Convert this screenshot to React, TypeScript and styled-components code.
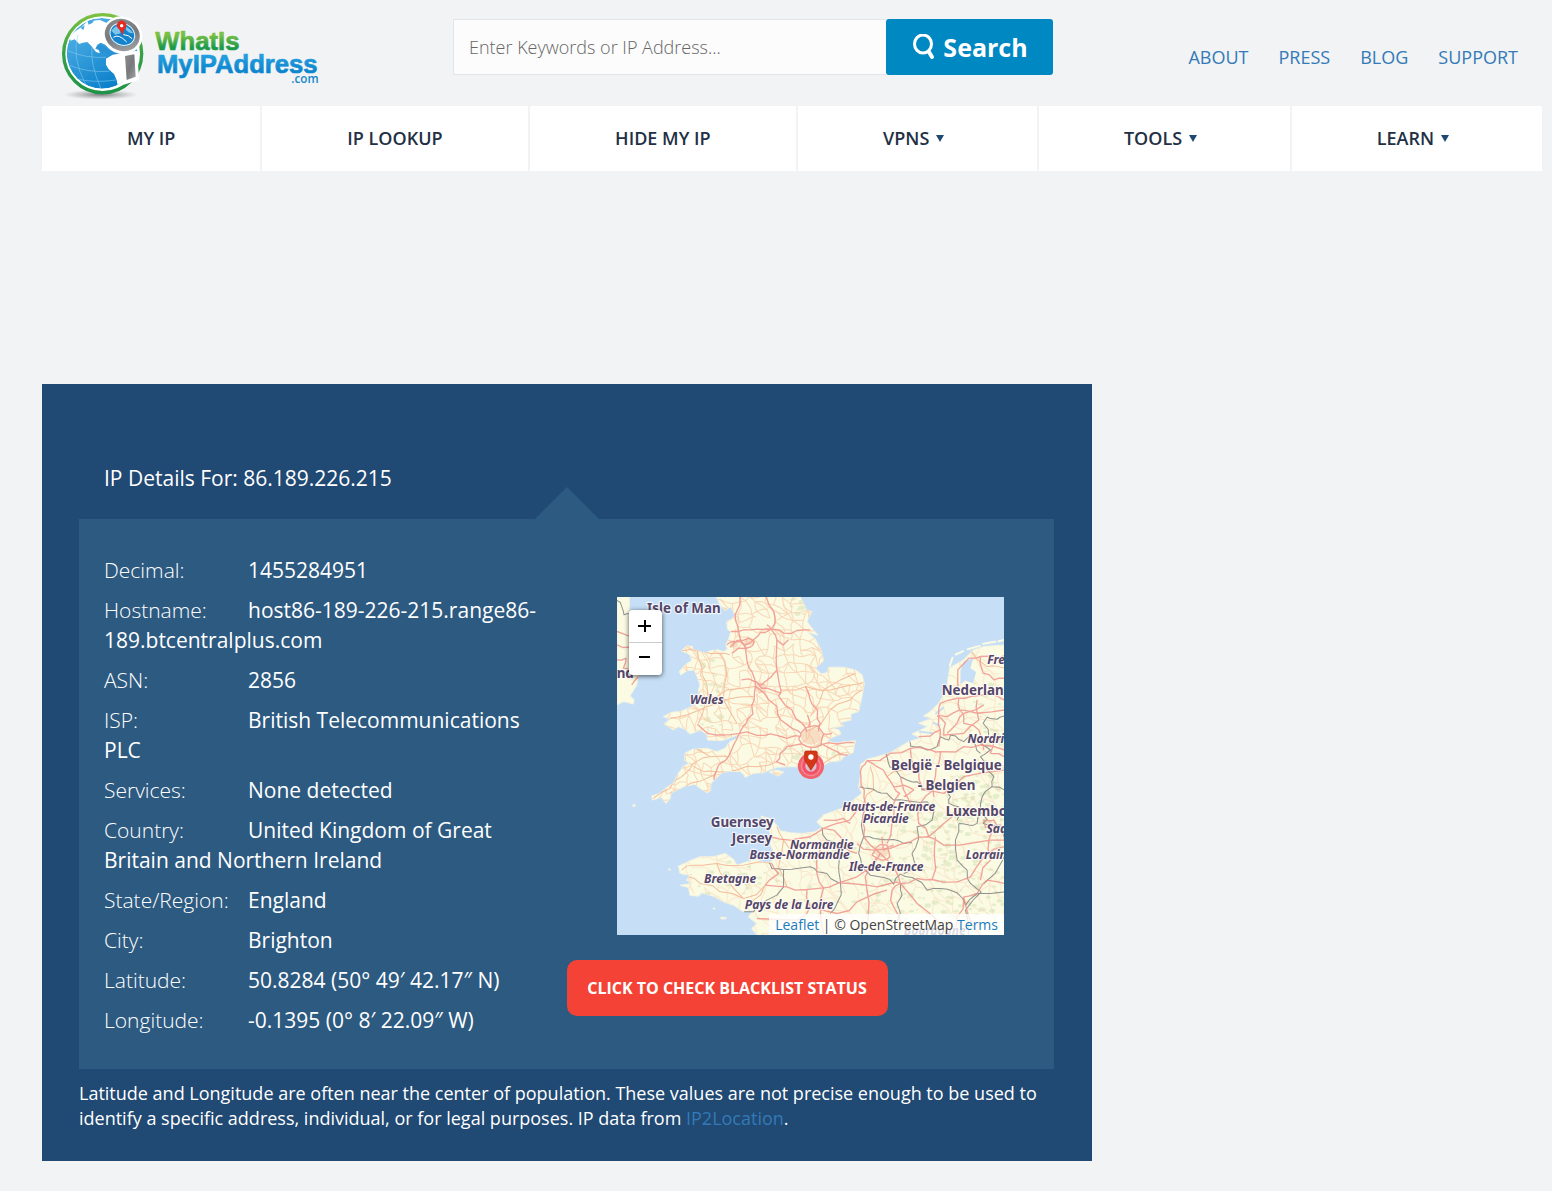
import React from 'react';
import styled, { createGlobalStyle } from 'styled-components';

const GlobalStyle = createGlobalStyle`
  *, *::before, *::after { box-sizing: border-box; }
  body {
    margin: 0;
    background: #f1f3f5;
    color: #fff;
    font-family: 'Open Sans', 'Noto Sans', sans-serif;
  }
`;

const Page = styled.div`
  padding: 0 10px 30px 42px;
`;

const Header = styled.header`
  display: grid;
  grid-template-columns: 411fr 600fr 489fr;
  height: 106px;
`;

const LogoLink = styled.a`
  padding-left: 18px;
  svg { display: block; }
`;

const SearchForm = styled.form`
  display: flex;
  height: 56px;
  margin-top: 19px;
`;

const SearchInput = styled.input`
  flex: 1;
  min-width: 0;
  padding: 0 15px;
  border: 1px solid #e3e5e8;
  border-right: 0;
  border-radius: 0;
  background: #fcfcfc;
  color: #444;
  font: 300 18px 'Open Sans', sans-serif;
  &::placeholder { color: #666; opacity: 1; }
`;

const SearchButton = styled.button`
  display: flex;
  align-items: center;
  justify-content: center;
  gap: 8px;
  width: 167px;
  padding: 0;
  border: 0;
  border-radius: 3px;
  background: #0088c2;
  color: #fff;
  font: 700 25px 'Open Sans', sans-serif;
  cursor: pointer;
`;

const TopLinks = styled.nav`
  display: flex;
  justify-content: flex-end;
  gap: 30px;
  padding: 45px 24px 0 0;
`;

const TopLink = styled.a`
  color: #337ab7;
  font-size: 18px;
  font-weight: 500;
  line-height: 25px;
  text-decoration: none;
`;

const MainNav = styled.nav`
  display: grid;
  grid-template-columns: 218fr 265fr 266fr 239fr 250fr 250fr;
  gap: 2px;
`;

const NavItem = styled.a<{ $menu?: boolean }>`
  display: flex;
  align-items: center;
  justify-content: center;
  gap: 7px;
  height: 65px;
  padding-bottom: 2px;
  padding-right: ${(p) => (p.$menu ? '8px' : '0')};
  background: #fff;
  color: #233044;
  font-size: 18px;
  font-weight: 600;
  text-decoration: none;
`;

const Caret = styled.span`
  width: 0;
  margin-top: 2px;
  border: 4px solid transparent;
  border-top: 7px solid #1f4973;
  border-bottom: 0;
`;

const Panel = styled.main`
  width: 70%;
  margin-top: 213px;
  padding: 79px 38px 30px 37px;
  background: #204973;
`;

const Title = styled.h1`
  margin: 0 0 26px;
  padding-left: 25px;
  font-size: 21px;
  font-weight: 400;
  line-height: 30px;
`;

const Details = styled.section`
  position: relative;
  display: grid;
  grid-template-columns: 1fr 1fr;
  background: #2d5a81;
  &::before {
    content: '';
    position: absolute;
    left: calc(50% - 32px);
    top: -32px;
    border: 32px solid transparent;
    border-top: 0;
    border-bottom-color: #2d5a81;
  }
`;

const Facts = styled.dl`
  display: flex;
  flex-direction: column;
  gap: 10px;
  margin: 0;
  padding: 36px 24px 34px 25px;
  font-size: 21px;
  line-height: 30px;
`;

const Fact = styled.div`
  dt {
    display: inline-block;
    min-width: 144px;
    font-weight: 300;
  }
  dd {
    display: inline;
    margin: 0;
  }
`;

const MapColumn = styled.div`
  display: flex;
  flex-direction: column;
  align-items: flex-start;
  gap: 25px;
  padding-top: 78px;
`;

const MapBox = styled.div`
  position: relative;
  align-self: stretch;
  height: 338px;
  margin: 0 50px;
  overflow: hidden;
  background: #c6dff6;
  > svg { display: block; width: 100%; height: 100%; }
`;

const ZoomControl = styled.div`
  position: absolute;
  left: 12px;
  top: 13px;
  width: 33px;
  overflow: hidden;
  border-radius: 4px;
  box-shadow: 0 1px 5px rgba(0, 0, 0, 0.65);
`;

const ZoomButton = styled.button`
  display: block;
  width: 100%;
  height: 32px;
  padding: 0;
  border: 0;
  background: #fff;
  & + & { height: 33px; border-top: 1px solid #ccc; }
  svg { display: block; margin: 0 auto; }
`;

const Attribution = styled.div`
  position: absolute;
  right: 0;
  bottom: 0;
  padding: 0 6px;
  background: rgba(255, 255, 255, 0.8);
  color: #444;
  font-size: 14px;
  line-height: 21px;
  a { color: #1a7dbd; text-decoration: none; }
`;

const BlacklistButton = styled.button`
  height: 56px;
  min-width: 321px;
  padding: 0 18px;
  border: 0;
  border-radius: 10px;
  background: #f44336;
  color: #fff;
  font: 700 16px 'Open Sans', sans-serif;
  cursor: pointer;
`;

const Note = styled.p`
  margin: 12px 0 0;
  font-size: 18px;
  line-height: 25px;
  a { color: #337ab7; text-decoration: none; }
`;

/* ---------- map drawing ---------- */

const BRITAIN =
  'M318 21L330 45L345 62L362 50L375 78L362 90L350 95L352 118L362 125L355 150L347 165L352 178L340 186L325 180L300 183L283 190L262 182L248 180L247 170L230 168L215 183L240 195L245 212L225 225L208 245L212 255L230 243L252 240L262 262L270 285L265 300L268 320L255 345L235 355L210 365L185 367L160 380L180 388L162 402L190 420L205 410L225 418L240 432L270 420L290 433L292 450L335 452L370 440L390 430L378 447L360 455L345 475L320 485L290 475L262 477L248 478L225 490L224 512L240 520L222 527L205 550L190 580L170 592L150 610L125 618L128 630L155 622L168 640L180 625L182 610L200 600L225 588L255 583L270 595L292 608L302 600L302 580L320 563L335 548L360 543L390 545L400 552L405 562L430 550L460 548L478 540L500 532L530 530L560 530L600 535L640 525L660 515L690 512L700 500L728 488L735 452L700 455L680 460L650 452L665 443L692 432L686 420L664 414L700 408L690 398L722 390L722 372L745 365L755 320L762 280L755 255L735 240L700 232L655 232L652 248L632 252L615 235L640 212L632 180L615 148L590 125L622 136L605 115L590 95L605 65L590 62L570 21ZM478 546L497 540L520 546L504 558Z';
const IRELAND = 'M21 21H58V120H70L85 255L80 285L60 318L72 330L70 342L40 335L21 345Z';
const CONTINENT =
  'M1182 165L1120 170L1090 180L1075 195L1060 210L1018 234L1012 270L1010 290L1000 315L985 340L960 365L940 378L965 385L925 400L952 410L905 432L932 444L895 455L870 470L840 488L800 500L770 508L750 525L750 560L745 590L755 610L735 625L710 650L680 660L640 675L620 695L635 712L615 725L580 730L540 728L510 722L500 706L480 686L452 678L470 700L480 730L480 760L490 790L485 815L460 817L440 808L410 815L380 825L370 808L345 790L310 800L270 800L240 812L205 828L210 850L240 855L230 870L245 880L210 885L235 892L240 915L265 918L275 908L310 918L340 935L370 945L400 965L430 960L415 980L440 1000L425 1015L440 1035H1182Z';

const RED_ROADS = [
  'M390 21L375 75L383 110L405 170L410 210L425 245L436 290L432 330L428 372L408 400L388 430L368 470L355 500L330 520L318 545L312 570',
  'M468 21L490 65L494 100L482 118L500 150L498 210L502 250L512 300L505 318L545 360L575 400L590 425',
  'M362 125L400 120L440 118L482 118L520 130L560 122L600 120',
  'M350 165L370 155L405 165L430 150L450 128L482 118L470 105',
  'M365 190L385 175L420 172L432 155L415 145L380 152L360 172',
  'M500 150L520 165L535 150',
  'M394 270L436 275L455 295L485 300L512 310',
  'M436 290L462 310L500 350L512 390L545 415L572 430',
  'M436 275L455 285L470 272L482 262L500 240',
  'M262 403L292 430L335 435L388 430L440 436L480 432L530 445L572 440',
  'M586 290L600 330L622 360L630 400L625 425',
  'M572 430L590 412L625 410L640 432L632 465L600 472L575 462L565 445L572 430',
  'M595 412L592 375M640 432L665 430M632 465L680 462L732 458M632 460L680 485L712 495',
  'M602 472V500M572 462L530 470L510 490L498 515L525 525',
  'M85 260L65 285M21 125L60 140M21 165L60 172M21 210L48 205L40 235L60 240',
  'M770 512L755 530L752 560L762 600L765 640L758 700L760 740',
  'M770 512L800 530L830 560L850 590L868 610L850 640L845 700L830 760',
  'M770 512L840 490L900 475L960 480L990 485L1060 470L1110 465L1182 480',
  'M850 590L880 585L910 600L880 620M870 560L880 600L900 640',
  'M990 485L985 520L975 560L970 620M900 475L925 545L940 600L1000 610L1060 560L1182 540',
  'M1075 205L1042 240V290M1075 205L1110 200L1150 205L1182 198M1110 200L1118 250L1150 270L1182 265',
  'M990 340L985 380L990 420L985 470M990 340L1040 325L1080 320L1182 330M1045 325L1048 360L1010 380L980 378M1048 360L1100 370L1182 360M1048 360L1060 400L1105 420L1120 480',
  'M980 378L1005 400L1000 435L1060 430L1105 390L1100 330M925 440L960 438L990 420M1182 440L1150 450L1140 490M1140 490L1182 500',
  'M1010 430L1040 400L1060 370L1120 345',
  'M800 770L830 765L838 800L815 810L785 795L800 770M815 740L820 780L850 765M760 740L810 790L850 830L870 880',
  'M740 760L790 780L840 775L900 755L955 740L1000 765L1080 760L1182 750',
  'M955 740L925 700L930 640L970 600M955 740L1000 700L1040 650M975 740L972 800L965 868',
  'M870 880L920 865L965 868L1040 875L1080 860L1120 800L1182 770',
  'M870 880L845 900L850 950L870 1000M870 880L920 940L970 980L1030 1035M810 790L780 830L770 900L772 1000',
  'M480 740L540 750L600 740L640 715L680 700L718 690L760 640M640 715L690 740L700 770L740 790M640 690L700 685L720 700',
  'M485 820L505 850L465 885M465 885L530 890L590 898L640 893L685 878L740 860L800 800M640 893L620 850L630 780M590 898L600 950L560 990L440 985',
  'M685 878L770 885L840 880L870 880M640 893L630 950L640 1030M600 950L680 970L740 935L830 900',
  'M1182 880L1130 870L1100 910L1060 920L1040 980L1030 1035M1060 920L1075 980L1110 1035M1140 700L1135 750L1140 810L1110 870',
  'M1120 690L1150 690L1160 710L1125 712Z',
];

const ORANGE_ROADS = [
  'M215 183L262 182L330 190L360 195M262 182L275 230L290 280L285 340L265 400M180 385L230 375L290 350L340 330L430 320',
  'M130 625L180 595L215 560L250 520L300 500L355 500M180 610L240 580L300 560L318 545M240 520L280 545L318 545',
  'M318 545L380 540L440 530L500 515M560 528L640 520L700 490M590 425L660 360L720 330L755 300M600 380L640 300L735 250',
  'M215 840L250 825L320 820L400 825L485 820M230 860L270 880L330 905L400 925L465 885M465 885L430 930L405 960M320 820L350 870L400 925',
  'M500 710L520 750L560 790L620 800L700 790M520 750L505 830L530 890M780 530L790 600L760 640M830 560L880 540L930 545M1080 180L1130 230L1182 235',
  'M262 477L300 500M330 190L350 250L340 330L380 400M436 290L350 300L268 320M512 300L586 290L660 300L755 280',
];

const BORDERS = [
  'M21 32L35 50L42 75L58 72',
  'M898 455L900 468L930 470L950 480L980 470L990 440L1015 450L1020 435L1045 448L1060 455L1075 440L1095 465L1110 490',
  'M1182 378L1160 388L1130 382L1118 400L1135 440L1110 460L1140 480L1110 500L1130 540L1150 560L1145 590L1182 600',
  'M828 492L838 530L860 545L890 570L920 575L935 600L1000 590L1020 620L1015 640L1045 650L1040 690',
  'M748 590L770 595L800 605L830 610L850 630L890 632L950 635L975 650M970 640L965 690L920 710L925 745L905 790L915 825L880 850',
  'M762 660L760 740L790 745L850 748L880 760L905 758M760 740L745 790L755 830L780 855L820 862L850 882L870 852L905 862L950 900L990 895L1040 908L1065 945L1100 910L1182 905',
  'M1045 700L1075 705L1100 700L1110 660L1115 620L1145 590M1045 700L1035 750L1040 810L1070 840L1080 880L1112 905L1065 960L1075 1035',
  'M1110 665L1130 690L1118 700L1170 705L1182 760M1120 880L1182 800',
  'M635 712L650 750L700 770L685 830L690 870L680 940L660 970',
  'M478 818L485 835L520 838L560 835L600 830L620 845L650 850L685 878M520 838V890L500 915L470 930L440 950L430 965L402 965',
  'M870 880L875 915L860 940L870 970L850 1035',
];

/* Deterministic noise for the lattice of local roads and the woodland specks. */
const noise = (a: number, b: number, k: number) => {
  const v = Math.sin(a * 127.1 + b * 311.7 + k * 74.7) * 43758.5453;
  return v - Math.floor(v);
};

/* Splits a leg at a displaced midpoint so that long lines wander as roads do. */
const wander = (a: number[], b: number[], k: number) => {
  const len = Math.hypot(b[0] - a[0], b[1] - a[1]);
  const mx = (a[0] + b[0]) / 2 + (noise(a[0], b[1], k) - 0.5) * len * 0.28;
  const my = (a[1] + b[1]) / 2 + (noise(a[1], b[0], k + 1) - 0.5) * len * 0.28;
  return `L${Math.round(mx)} ${Math.round(my)}L${b[0]} ${b[1]}`;
};

const roughen = (d: string) =>
  d.replace(/M([^MZ]+)/g, (_, body: string) => {
    if (/[HV]/.test(body)) return `M${body}`;
    const pts = body.split('L').map((p) => p.trim().split(' ').map(Number));
    return `M${pts[0].join(' ')}` + pts.slice(1).map((p, i) => wander(pts[i], p, i)).join('');
  });

const lattice = (x0: number, y0: number, x1: number, y1: number, step: number, keep: number) => {
  const node = (i: number, j: number) => [
    Math.round(x0 + i * step + (noise(i, j, 1) - 0.5) * step * 0.9),
    Math.round(y0 + j * step + (noise(i, j, 2) - 0.5) * step * 0.9),
  ];
  const leg = (a: number[], b: number[]) => `M${a.join(' ')}${wander(a, b, 9)}`;
  let d = '';
  for (let i = 0; x0 + i * step <= x1; i++) {
    for (let j = 0; y0 + j * step <= y1; j++) {
      if (noise(i, j, 3) < keep) d += leg(node(i, j), node(i + 1, j));
      if (noise(i, j, 4) < keep) d += leg(node(i, j), node(i, j + 1));
      if (noise(i, j, 5) < keep * 0.45) d += leg(node(i, j), node(i + 1, j + 1));
    }
  }
  return d;
};

const BRITAIN_LANES = lattice(120, 10, 780, 660, 27, 0.75);
const CONTINENT_LANES = lattice(190, 150, 1190, 1040, 34, 0.55);

const WOODS: [number, number, number][] = [];
const wood = (x: number, y: number, w: number, h: number, n: number) => {
  for (let i = 0; i < n; i++) {
    WOODS.push([
      Math.round(x + noise(i, x, 6) * w),
      Math.round(y + noise(i, y, 7) * h),
      3 + Math.round(noise(i, x + y, 8) * 7),
    ]);
  }
};
wood(265, 200, 70, 210, 24);
wood(540, 25, 40, 50, 10);
wood(520, 460, 160, 55, 18);
wood(780, 660, 400, 370, 240);
wood(1010, 530, 170, 160, 80);
wood(480, 740, 300, 290, 40);
wood(240, 810, 230, 110, 22);
wood(1080, 280, 100, 200, 20);

type Label = { x: number; y: number; text: string; country?: boolean };
const LABELS: Label[] = [
  { x: 111, y: 71, text: 'Isle of Man', country: true },
  { x: 20, y: 264, text: 'nd', country: true },
  { x: 240, y: 341, text: 'Wales' },
  { x: 1130, y: 222, text: 'Fre' },
  { x: 994, y: 314, text: 'Nederlan', country: true },
  { x: 1071, y: 458, text: 'Nordri' },
  { x: 842, y: 539, text: 'België - Belgique', country: true },
  { x: 922, y: 599, text: '- Belgien', country: true },
  { x: 696, y: 664, text: 'Hauts-de-France' },
  { x: 757, y: 699, text: 'Picardie' },
  { x: 1006, y: 679, text: 'Luxembo', country: true },
  { x: 1128, y: 730, text: 'Saa' },
  { x: 302, y: 710, text: 'Guernsey', country: true },
  { x: 365, y: 760, text: 'Jersey', country: true },
  { x: 539, y: 776, text: 'Normandie' },
  { x: 418, y: 808, text: 'Basse-Normandie' },
  { x: 716, y: 843, text: 'Ile-de-France' },
  { x: 1066, y: 806, text: 'Lorrain' },
  { x: 282, y: 879, text: 'Bretagne' },
  { x: 404, y: 956, text: 'Pays de la Loire' },
  { x: 880, y: 1033, text: 'Bourgogne' },
];

const MapLabel = styled.text<{ $country?: boolean }>`
  fill: #564669;
  stroke: #fff;
  stroke-opacity: 0.7;
  stroke-width: 7px;
  stroke-linejoin: round;
  paint-order: stroke;
  font-family: 'Noto Sans', 'Open Sans', sans-serif;
  font-size: ${(p) => (p.$country ? '40px' : '36px')};
  font-weight: 700;
  font-style: ${(p) => (p.$country ? 'normal' : 'italic')};
`;

const RegionMap = () => (
  <svg viewBox="21 21 1161 1014" preserveAspectRatio="xMidYMid slice" role="img" aria-label="Map of the area around Brighton">
    <defs>
      <clipPath id="britain"><path d={BRITAIN} /></clipPath>
      <clipPath id="continent"><path d={CONTINENT} /></clipPath>
      <clipPath id="land"><path d={BRITAIN + CONTINENT + IRELAND} /></clipPath>
    </defs>
    <rect x="21" y="21" width="1161" height="1014" fill="#c6dff6" />
    <path d={BRITAIN + CONTINENT + IRELAND} fill="#fbfae3" stroke="#f3f3df" strokeWidth="3" strokeLinejoin="round" />
    <g clipPath="url(#land)" fill="#cfe0b2" opacity="0.5">
      {WOODS.map(([x, y, r], i) => (
        <ellipse key={i} cx={x} cy={y} rx={r} ry={Math.max(3, r - 3)} />
      ))}
    </g>
    <g fill="none" strokeWidth="3" stroke="#f8cdab" opacity="0.75">
      <path d={BRITAIN_LANES} clipPath="url(#britain)" />
      <path d={CONTINENT_LANES} clipPath="url(#continent)" opacity="0.5" />
    </g>
    <g fill="none" stroke="#f5bd9b" strokeWidth="3" strokeLinejoin="round" clipPath="url(#land)">
      {ORANGE_ROADS.map((d) => <path key={d} d={roughen(d)} />)}
    </g>
    <g fill="#f3b394" opacity="0.4">
      <ellipse cx="602" cy="440" rx="30" ry="24" />
      <ellipse cx="452" cy="294" rx="18" ry="15" />
      <ellipse cx="418" cy="156" rx="16" ry="10" />
      <ellipse cx="372" cy="165" rx="12" ry="9" />
      <ellipse cx="814" cy="786" rx="20" ry="16" />
    </g>
    <path d="M1060 216L1088 205L1080 235L1097 246L1088 280L1062 272L1050 285V242Z" fill="#c6dff6" />
    <path d="M1000 352L975 372M968 398L990 408M925 425L968 430" stroke="#c6dff6" strokeWidth="6" />
    <path d="M1018 228L1026 204M1036 194L1058 184M1072 178L1108 168M1118 162L1155 156M1164 154L1182 150" stroke="#fbfae3" strokeWidth="6" strokeLinecap="round" />
    <g fill="none" stroke="#777a7c" strokeWidth="3" strokeLinejoin="round" opacity="0.8">
      {BORDERS.map((d) => <path key={d} d={roughen(d)} />)}
    </g>
    <g fill="none" stroke="#f08f89" strokeWidth="4" strokeLinejoin="round" opacity="0.8">
      {RED_ROADS.map((d) => <path key={d} d={roughen(d)} />)}
    </g>
    <g fill="#f3f3df">
      <circle cx="72" cy="646" r="5" /><circle cx="178" cy="838" r="4" />
      <ellipse cx="340" cy="984" rx="10" ry="4" /><ellipse cx="312" cy="955" rx="5" ry="3" />
    </g>
    {LABELS.map((l) => (
      <MapLabel key={l.text} x={l.x} y={l.y} $country={l.country}>{l.text}</MapLabel>
    ))}
    <g>
      <circle cx="602" cy="528" r="39" fill="#f0616c" />
      <circle cx="602" cy="528" r="31" fill="#f5848c" />
      <circle cx="602" cy="528" r="26" fill="#f34f68" />
      <circle cx="602" cy="528" r="17" fill="#dcc0cf" />
      <path d="M588 483H616Q621 483 621 488V510L602 541L583 510V488Q583 483 588 483Z" fill="#d33716" stroke="#b32b10" strokeWidth="2" />
      <circle cx="602" cy="501" r="8" fill="#fff" />
    </g>
  </svg>
);

/* ---------- logo ---------- */

const LogoName = styled.text`
  font-family: 'Liberation Sans', Arial, sans-serif;
  font-size: 77px;
  font-weight: 700;
  stroke-width: 2px;
  stroke-linejoin: round;
`;

const LogoSuffix = styled.text`
  font-family: 'Open Sans', sans-serif;
  font-size: 35px;
  font-weight: 600;
`;

const Logo = () => (
  <svg width="262" height="104" viewBox="30 0 786 312" role="img" aria-label="WhatIsMyIPAddress.com">
    <defs>
      <linearGradient id="ring" x1="0" y1="0" x2="0" y2="1"><stop offset="0" stopColor="#7cc142" /><stop offset="0.5" stopColor="#35a048" /><stop offset="1" stopColor="#1f9347" /></linearGradient>
      <linearGradient id="green" gradientUnits="userSpaceOnUse" x1="0" y1="92" x2="0" y2="154"><stop offset="0.2" stopColor="#7ac143" /><stop offset="0.8" stopColor="#1d9a49" /></linearGradient>
      <linearGradient id="blue" gradientUnits="userSpaceOnUse" x1="0" y1="160" x2="0" y2="234"><stop offset="0" stopColor="#27a3e0" /><stop offset="0.7" stopColor="#0d86cd" /></linearGradient>
      <linearGradient id="sea" x1="0" y1="0" x2="0.6" y2="1"><stop offset="0" stopColor="#5cb8e8" /><stop offset="1" stopColor="#0c80cb" /></linearGradient>
      <linearGradient id="metal" x1="0" y1="0" x2="1" y2="1"><stop offset="0" stopColor="#8b8d8f" /><stop offset="0.5" stopColor="#77797c" /><stop offset="1" stopColor="#a3a5a7" /></linearGradient>
      <radialGradient id="shade"><stop offset="0" stopColor="#555" stopOpacity="0.75" /><stop offset="1" stopColor="#888" stopOpacity="0" /></radialGradient>
      <clipPath id="globe"><circle cx="156" cy="160" r="106" /></clipPath>
    </defs>
    <ellipse cx="152" cy="284" rx="112" ry="15" fill="url(#shade)" />
    <circle cx="158" cy="161" r="117" fill="#fff" stroke="url(#ring)" strokeWidth="10" />
    <g clipPath="url(#globe)">
      <circle cx="156" cy="160" r="106" fill="url(#sea)" />
      <path d="M78 92L96 80L112 64L150 60L172 70V100L170 124L178 144L166 134L152 128L142 134L136 146L146 150L150 160L138 156L124 138L112 126L98 128L88 132L74 118L62 122L58 110Z" fill="#fff" />
      <path d="M140 142L152 134L166 142L176 154L192 158L186 164L168 158L154 156Z" fill="#2a93d6" />
      <path d="M168 176L188 164L216 160L262 152V230L236 250L204 262L200 240L192 222L176 208L168 194Z" fill="#fff" />
      <path d="M112 62L134 55L128 68L116 74ZM92 84L104 76L100 90Z" fill="#3fa8e0" />
      <g fill="none" stroke="#8bd0f2" strokeWidth="2" opacity="0.8">
        <path d="M52 152Q110 176 168 172M58 196Q110 218 178 214M78 236Q130 250 198 240" />
        <path d="M84 104Q64 170 106 252M126 142Q120 190 152 264" />
      </g>
    </g>
    <ellipse cx="217" cy="106" rx="61" ry="56" fill="#fff" transform="rotate(25 217 106)" />
    <ellipse cx="217" cy="105" rx="46" ry="40" fill="#1c8fd6" stroke="url(#metal)" strokeWidth="15" transform="rotate(25 217 105)" />
    <ellipse cx="217" cy="103" rx="38" ry="32" fill="#1583cc" stroke="#e8f4fb" strokeWidth="3" transform="rotate(25 217 103)" />
    <path d="M184 92Q196 76 206 78L212 100L196 104ZM228 80Q242 86 250 100L238 98L228 90Z" fill="#7cc6ec" />
    <path d="M190 112Q206 100 230 126M220 104Q236 104 246 116" fill="none" stroke="#fff" strokeWidth="3" />
    <path d="M217 106Q212 90 203 84A14 14 0 1 1 227 83Q221 90 217 106Z" fill="#e52b20" />
    <circle cx="215" cy="77" r="5" fill="#fff" />
    <path d="M218 160L262 154L267 240L221 254Z" fill="#fff" />
    <path d="M225 168L253 163L257 230L230 240Z" fill="url(#metal)" />
    <LogoName x="316" y="151" fill="url(#green)" stroke="url(#green)">WhatIs</LogoName>
    <LogoName x="321" y="218" fill="url(#blue)" stroke="url(#blue)">MyIPAddress</LogoName>
    <LogoSuffix x="724" y="248" fill="#1487cb">.com</LogoSuffix>
  </svg>
);

/* ---------- page ---------- */

const TOP_LINKS = ['ABOUT', 'PRESS', 'BLOG', 'SUPPORT'];

const NAV: { label: string; menu?: boolean }[] = [
  { label: 'MY IP' },
  { label: 'IP LOOKUP' },
  { label: 'HIDE MY IP' },
  { label: 'VPNS', menu: true },
  { label: 'TOOLS', menu: true },
  { label: 'LEARN', menu: true },
];

const FACTS = [
  ['Decimal:', '1455284951'],
  ['Hostname:', 'host86-189-226-215.range86-189.btcentralplus.com'],
  ['ASN:', '2856'],
  ['ISP:', 'British Telecommunications PLC'],
  ['Services:', 'None detected'],
  ['Country:', 'United Kingdom of Great Britain and Northern Ireland'],
  ['State/Region:', 'England'],
  ['City:', 'Brighton'],
  ['Latitude:', '50.8284 (50° 49′ 42.17″ N)'],
  ['Longitude:', '-0.1395 (0° 8′ 22.09″ W)'],
];

export default function App() {
  return (
    <>
      <GlobalStyle />
      <Page>
        <Header>
          <LogoLink href="#"><Logo /></LogoLink>
          <SearchForm role="search" onSubmit={(e) => e.preventDefault()}>
            <SearchInput type="text" aria-label="Search" placeholder="Enter Keywords or IP Address..." />
            <SearchButton type="submit">
              <svg width="24" height="26" viewBox="0 0 24 26" fill="none" stroke="#fff" strokeWidth="3" strokeLinecap="round" aria-hidden="true">
                <ellipse cx="12" cy="10" rx="8.5" ry="9" />
                <path d="M18 18L21 23" strokeWidth="4" />
              </svg>
              Search
            </SearchButton>
          </SearchForm>
          <TopLinks aria-label="Site">
            {TOP_LINKS.map((t) => <TopLink key={t} href="#">{t}</TopLink>)}
          </TopLinks>
        </Header>
        <MainNav aria-label="Main">
          {NAV.map((n) => (
            <NavItem key={n.label} href="#" $menu={n.menu}>
              {n.label}
              {n.menu && <Caret />}
            </NavItem>
          ))}
        </MainNav>
        <Panel>
          <Title>IP Details For: 86.189.226.215</Title>
          <Details>
            <Facts>
              {FACTS.map(([term, value]) => (
                <Fact key={term}>
                  <dt>{term}</dt>
                  <dd>{value}</dd>
                </Fact>
              ))}
            </Facts>
            <MapColumn>
              <MapBox>
                <RegionMap />
                <ZoomControl>
                  <ZoomButton type="button" aria-label="Zoom in">
                    <svg width="14" height="14" viewBox="0 0 14 14" stroke="#000" strokeWidth="2"><path d="M0 7H13M7 1V13" /></svg>
                  </ZoomButton>
                  <ZoomButton type="button" aria-label="Zoom out">
                    <svg width="14" height="14" viewBox="0 0 14 14" stroke="#000" strokeWidth="2"><path d="M1 5H12" /></svg>
                  </ZoomButton>
                </ZoomControl>
                <Attribution>
                  <a href="#">Leaflet</a> | © OpenStreetMap <a href="#">Terms</a>
                </Attribution>
              </MapBox>
              <BlacklistButton type="button">CLICK TO CHECK BLACKLIST STATUS</BlacklistButton>
            </MapColumn>
          </Details>
          <Note>
            Latitude and Longitude are often near the center of population. These values are not precise enough to be used to identify a specific address, individual, or for legal purposes. IP data from <a href="#">IP2Location</a>.
          </Note>
        </Panel>
      </Page>
    </>
  );
}
